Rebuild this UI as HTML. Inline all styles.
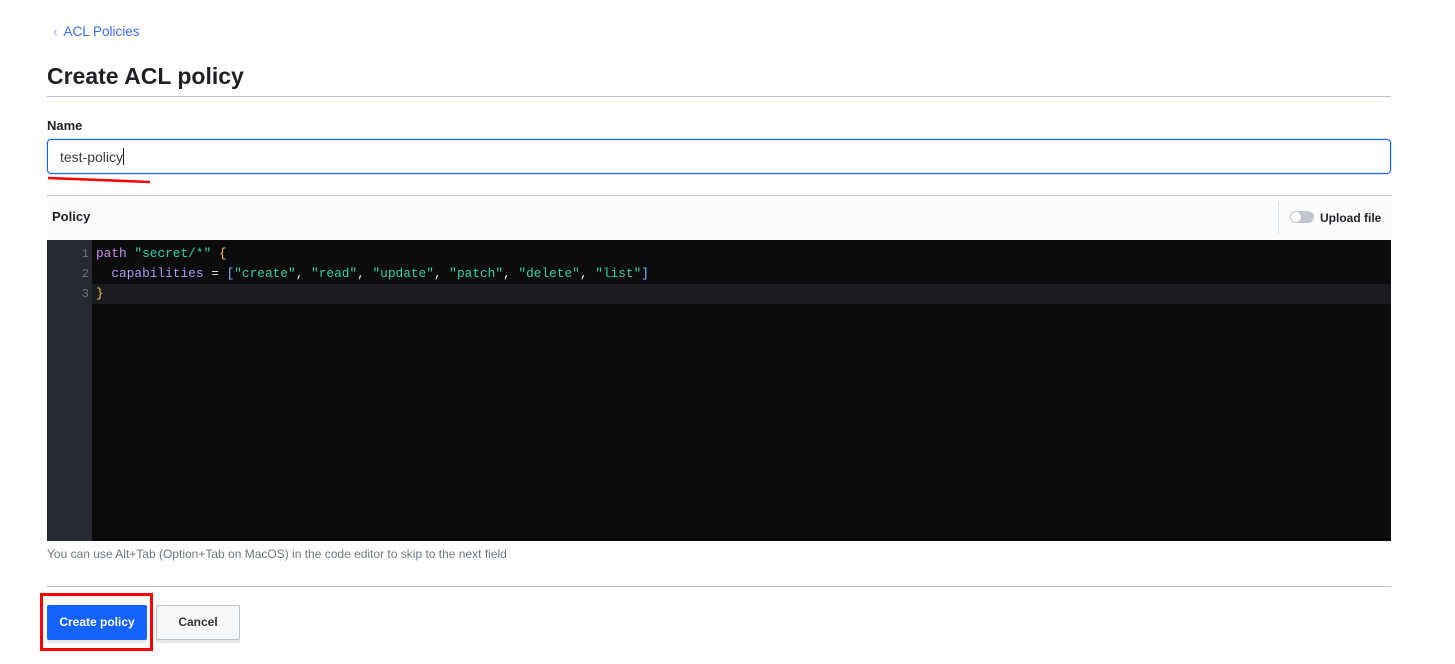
<!DOCTYPE html>
<html><head><meta charset="utf-8"><style>
*{box-sizing:border-box;margin:0;padding:0}
body{width:1455px;height:664px;background:#fff;font-family:"Liberation Sans",sans-serif;position:relative;overflow:hidden;color:#1f2124}
.abs{position:absolute}
.code{font-family:"Liberation Mono",monospace;font-size:12.8px;line-height:20px;white-space:pre}
</style></head><body>
<div class="abs" style="left:53px;top:24px;font-size:13.5px;color:#3b6cf5"><span style="color:#9aa7f0;margin-right:6px">&#x2039;</span>ACL Policies</div>
<div class="abs" style="left:47px;top:63px;font-size:23px;font-weight:bold;color:#1f2124">Create ACL policy</div>
<div class="abs" style="left:47px;top:96px;width:1344px;height:1px;background:#bac1cc"></div>
<div class="abs" style="left:47px;top:118px;font-size:13px;font-weight:bold">Name</div>
<div class="abs" style="left:47px;top:139px;width:1344px;height:35px;border:1px solid #1563ff;border-radius:4px;box-shadow:0 0 0 1px rgba(21,99,255,.15)"></div>
<div class="abs" style="left:60px;top:148px;font-size:14px;color:#3a3d42">test-policy<span style="display:inline-block;width:1px;height:17px;background:#222;vertical-align:-3px"></span></div>
<svg class="abs" style="left:46px;top:175px" width="108" height="10"><path d="M2 3 L104 7" stroke="#f00" stroke-width="2.5" fill="none"/></svg>
<div class="abs" style="left:47px;top:195px;width:1344px;height:46px;background:#fafbfc;border-top:1px solid #bac1cc"></div>
<div class="abs" style="left:52px;top:209px;font-size:13px;font-weight:bold">Policy</div>
<div class="abs" style="left:1278px;top:202px;width:1px;height:32px;background:#dce0e6"></div>
<div class="abs" style="left:1290px;top:211px;width:24px;height:12px;border-radius:6px;background:#c2c5cb"></div>
<div class="abs" style="left:1291px;top:212px;width:10px;height:10px;border-radius:5px;background:#fff"></div>
<div class="abs" style="left:1320px;top:211px;font-size:12px;font-weight:bold">Upload file</div>
<div class="abs" style="left:47px;top:240px;width:1344px;height:301px;background:#0c0c0e"></div>
<div class="abs" style="left:47px;top:240px;width:45px;height:301px;background:#272a30"></div>
<div class="abs" style="left:92px;top:284px;width:1299px;height:20px;background:#1b1c20"></div>
<div class="abs code" style="left:47px;top:244px;width:42px;text-align:right;color:#6b7079;font-size:12px">1
2
3</div>
<div class="abs code" style="left:96px;top:244px;color:#e0e0e0"><span style="color:#c792ea">path</span> <span style="color:#2ed3a0">"secret/*"</span> <span style="color:#f3c04a">{</span>
  <span style="color:#a99cf2">capabilities</span> = <span style="color:#7fb2ff">[</span><span style="color:#2ed3a0">"create"</span>, <span style="color:#2ed3a0">"read"</span>, <span style="color:#2ed3a0">"update"</span>, <span style="color:#2ed3a0">"patch"</span>, <span style="color:#2ed3a0">"delete"</span>, <span style="color:#2ed3a0">"list"</span><span style="color:#7fb2ff">]</span>
<span style="color:#f3c04a">}</span></div>
<div class="abs" style="left:47px;top:547px;font-size:12px;color:#6f7682">You can use Alt+Tab (Option+Tab on MacOS) in the code editor to skip to the next field</div>
<div class="abs" style="left:47px;top:586px;width:1344px;height:1px;background:#bac1cc"></div>
<div class="abs" style="left:40px;top:593px;width:113px;height:58px;border:3px solid #f00"></div>
<div class="abs" style="left:47px;top:605px;width:100px;height:35px;background:#1563ff;border-radius:2px;color:#fff;font-size:12px;font-weight:bold;text-align:center;line-height:35px;box-shadow:0 3px 0 #e6e7ea">Create policy</div>
<div class="abs" style="left:156px;top:605px;width:84px;height:35px;background:#f7f8fa;border:1px solid #bac1cc;border-radius:2px;font-size:12px;font-weight:bold;text-align:center;line-height:33px;color:#333;box-shadow:0 3px 0 #e6e7ea">Cancel</div>
</body></html>
